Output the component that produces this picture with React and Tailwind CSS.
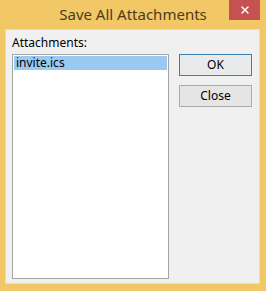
import { X } from "lucide-react";

const Button = ({ children, focused }) => (
  <button
    type="button"
    className={`h-[22px] w-[73px] border text-[12px] text-black ${
      focused ? "border-[#3c7fb1] bg-[#e8eaec]" : "border-[#acacac] bg-[#e5e5e5]"
    }`}
  >
    {children}
  </button>
);

export default function App() {
  return (
    <div
      className="flex h-[291px] w-[266px] flex-col bg-[#f1c865]"
      style={{ fontFamily: '"Noto Sans", "Open Sans", sans-serif' }}
    >
      <div className="relative flex h-[29px] shrink-0 items-center justify-center">
        <span className="text-[15px] leading-none text-[#4b3b1c]">Save All Attachments</span>
        <button
          type="button"
          className="absolute right-[6px] top-0 flex h-[20px] w-[31px] items-center justify-center bg-[#c75050] text-white"
        >
          <X size={12} strokeWidth={3} />
        </button>
      </div>

      <div className="mb-[7px] ml-[5px] mr-[6px] flex flex-1 border border-[#f7dc9c] bg-[#f0f0f0] pl-[6px] pt-[5px] text-[12px] text-black">
        <div className="flex flex-col">
          <span className="leading-[16px]">Attachments:</span>
          <div className="mt-[3px] h-[225px] w-[157px] border border-[#a5a5a5] bg-white p-[1px]">
            <div className="flex h-[14px] items-center bg-[#99c9f1] pl-[2px] leading-none">invite.ics</div>
          </div>
        </div>
        <div className="ml-[10px] mt-[19px] flex flex-col gap-[9px]">
          <Button focused>OK</Button>
          <Button>Close</Button>
        </div>
      </div>
    </div>
  );
}
